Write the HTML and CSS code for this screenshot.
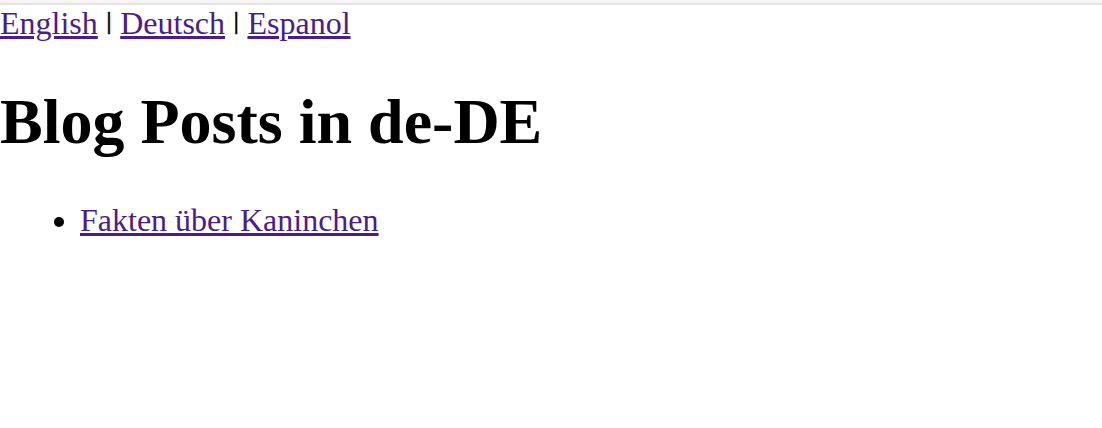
FILE: index.html
```html
<!DOCTYPE html>
<html lang="de">
<head>
<meta charset="utf-8">
<title>Blog Posts in de-DE</title>
<link rel="stylesheet" href="styles.css">
</head>
<body>
<div class="topbar"></div>
<nav class="langs"><a href="#en" class="link">English</a> <span class="sep">|</span> <a href="#de" class="link">Deutsch</a> <span class="sep">|</span> <a href="#es" class="link">Espanol</a></nav>
<h1 class="title">Blog Posts in de-DE</h1>
<ul class="posts">
<li><a href="#rabbits" class="link">Fakten über Kaninchen</a></li>
</ul>
</body>
</html>
```
FILE: styles.css
```css
html, body {
  margin: 0;
  padding: 0;
  background: #ffffff;
}
body {
  font-family: "Liberation Serif", "Times New Roman", serif;
  font-size: 32px;
  line-height: normal;
  color: #000000;
}
.topbar {
  height: 3px;
  background: #f7f5f5;
  border-bottom: 2px solid #e4e4e4;
}
.langs {
  margin: 0;
}
.sep {
  display: inline-block;
  color: #000000;
  -webkit-text-stroke: 0.4px #000000;
  transform: scaleY(0.8);
  transform-origin: 50% 6px;
}
.link {
  color: #4b1c8c;
  text-decoration: underline;
}
.title {
  font-size: 64px;
  font-weight: bold;
  margin: 43px 0;
}
.posts {
  margin: 32px 0;
  padding-left: 80px;
}
```
